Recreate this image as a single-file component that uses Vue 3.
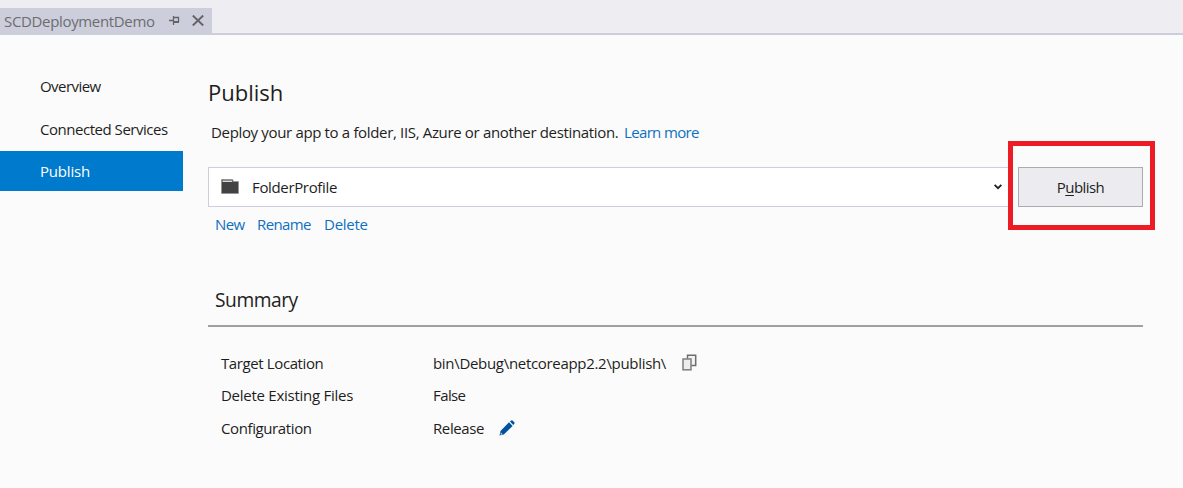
<script setup>
const rows = [
  { label: 'Target Location', value: 'bin\\Debug\\netcoreapp2.2\\publish\\', icon: 'copy', cls: 'target' },
  { label: 'Delete Existing Files', value: 'False', icon: '', cls: 'existing' },
  { label: 'Configuration', value: 'Release', icon: 'edit', cls: 'config' }
]
</script>

<template>
  <div class="window">
    <header class="tabs">
      <div class="tab">
        <span class="tab-name">SCDDeploymentDemo</span>
        <svg class="pin" width="11" height="9" viewBox="0 0 11 9" fill="none" stroke="#626267">
          <path d="M0 4.5H4M4.5 0V9M5 1.5H9.5V6" stroke-width="1.3" />
          <path d="M5 6H10" stroke-width="2" />
        </svg>
        <svg class="close" width="12" height="11" viewBox="0 0 12 11" fill="none" stroke="#626267" stroke-width="1.9">
          <path d="M.8 .5L11.2 10.5M11.2 .5L.8 10.5" />
        </svg>
      </div>
    </header>
    <div class="body">
      <nav class="nav">
        <a class="item overview"><span>Overview</span></a>
        <a class="item services"><span>Connected Services</span></a>
        <a class="item active"><span>Publish</span></a>
      </nav>
      <main class="main">
        <h1>Publish</h1>
        <p class="intro"><span class="desc">Deploy your app to a folder, IIS, Azure or another destination.</span><a class="learn">Learn more</a></p>
        <div class="bar">
          <div class="select">
            <svg class="folder" width="18" height="15" viewBox="0 0 18 15">
              <path d="M.5 .5H11.5L12.5 2.5H17.5V14.5H.5Z" fill="#424242" />
              <path d="M1.5 1.5H10.8L11.6 3H1.5Z" fill="#d8dbd8" />
              <path d="M.5 .5H11.5L12.5 2.5H17.5V14.5H.5Z" fill="none" stroke="#8b8d8b" stroke-width=".6" />
            </svg>
            <span class="profile">FolderProfile</span>
            <svg class="chevron" width="8" height="6" viewBox="0 0 8 6" fill="none" stroke="#1e1e1e" stroke-width="1.8">
              <path d="M.6 .9L4 4.2L7.4 .9" />
            </svg>
          </div>
          <div class="highlight">
            <button class="publish"><span>P<u>u</u>blish</span></button>
          </div>
        </div>
        <div class="actions"><a class="new">New</a><a class="rename">Rename</a><a class="delete">Delete</a></div>
        <h2>Summary</h2>
        <dl>
          <div v-for="r in rows" :key="r.label" class="row" :class="r.cls">
            <dt>{{ r.label }}</dt>
            <dd>
              <span>{{ r.value }}</span>
              <svg v-if="r.icon === 'copy'" class="copy" width="15" height="17" viewBox="0 0 15 17">
                <path d="M5.5 5V1.2H13.7V11.5H9" fill="#f3f3f5" stroke="#6d6d6d" stroke-width="1.5" />
                <rect x="1" y="5" width="8" height="10.8" fill="#ededf1" stroke="#858585" stroke-width="1.6" />
              </svg>
              <svg v-if="r.icon === 'edit'" class="edit" width="16" height="16" viewBox="0 0 16 16">
                <path d="M.5 15.5L1.5 11L10 2.3L13.6 5.9L4.8 14.6Z" fill="#00539c" />
                <path d="M11 1.6L12.2 .5Q13 0 13.8 .7L15.3 2.2Q16 3 15.3 3.8L14.2 4.9Z" fill="#00539c" />
                <path d="M1.7 12.2L3.7 14.2L1.6 14.7Z" fill="#c7d8e8" />
              </svg>
            </dd>
          </div>
        </dl>
      </main>
    </div>
  </div>
</template>

<style>
body { background: #fbfbfb; }
</style>
<style scoped>
.window {
  width: 1183px;
  height: 488px;
  overflow: hidden;
  background: #fbfbfb;
  color: #1e1e1e;
  font: 15px/20px "Open Sans", "Noto Sans", sans-serif;
  white-space: nowrap;
}
.tabs {
  box-sizing: border-box;
  height: 35px;
  padding-top: 8px;
  background: #eeeef2;
  border-bottom: 2px solid #cccedb;
}
.tab {
  display: flex;
  box-sizing: border-box;
  width: 212px;
  height: 27px;
  padding: 3px 0 0 4px;
  background: #cccedb;
  color: #6d6d70;
}
.tab-name { width: 165px; letter-spacing: -.34px; }
.pin { margin-top: 5px; }
.close { margin: 4px 0 0 12px; }
.body { display: flex; }
.nav { flex: none; width: 183px; padding-top: 30px; }
.item { display: flex; align-items: center; box-sizing: border-box; height: 43px; padding: 0 0 2px 40px; }
.overview { letter-spacing: -.55px; }
.services { letter-spacing: -.47px; }
.active { height: 40px; padding-bottom: 0; background: #007acc; color: #fff; letter-spacing: -.2px; }
.main { flex: none; width: 975px; padding-left: 25px; }
h1 { margin: 42px 0 0; height: 30px; font-size: 22px; line-height: 30px; font-weight: 400; letter-spacing: 0; }
.intro { display: flex; margin: 15px 0 0 3px; }
.desc { width: 413px; letter-spacing: -.34px; }
.learn, .actions { color: #0e70c0; }
.learn { letter-spacing: -.65px; }
.bar { display: flex; height: 40px; margin-top: 25px; }
.select {
  display: flex;
  align-items: center;
  box-sizing: border-box;
  width: 800px;
  height: 40px;
  padding-left: 12px;
  background: #fff;
  border: 1px solid #cccedb;
  border-right: 0;
}
.folder { margin: 0 13px 2px 0; }
.profile { width: 742px; letter-spacing: -.35px; }
.chevron { flex: none; }
.highlight {
  box-sizing: border-box;
  width: 147px;
  height: 89px;
  margin-top: -26px;
  padding: 21px 5px;
  border: 5px solid #ed1c24;
  background: #fbfbfb;
}
.publish {
  display: flex;
  justify-content: center;
  align-items: center;
  box-sizing: border-box;
  width: 125px;
  height: 40px;
  padding: 0;
  border: 1px solid #acacac;
  background: #ececf0;
  color: #1e1e1e;
  font: inherit;
  letter-spacing: -.57px;
}
u { text-underline-offset: 2px; text-decoration-thickness: 1px; text-decoration-skip-ink: none; }
.actions { display: flex; margin: 7px 0 0 7px; }
.new { width: 42px; letter-spacing: -.55px; }
.rename { width: 67px; letter-spacing: -.6px; }
.delete { letter-spacing: -.25px; }
h2 {
  width: 928px;
  height: 40px;
  margin: 51px 0 0;
  padding-left: 7px;
  border-bottom: 2px solid #a0a0a0;
  font-size: 19.2px;
  line-height: 30px;
  font-weight: 400;
  letter-spacing: -.45px;
}
dl { margin: 26px 0 0 13px; }
.row { display: flex; height: 32px; }
.existing { height: 33px; }
dt { width: 212px; letter-spacing: -.39px; }
.existing dt { letter-spacing: -.26px; }
dd { display: flex; margin: 0; letter-spacing: -.39px; }
.existing dd { letter-spacing: -.6px; }
.target dd { letter-spacing: -.31px; }
.target dd span { width: 249px; }
.config dd span { width: 66px; }
.copy { margin-top: 1px; }
.edit { margin-top: 2px; }
</style>
